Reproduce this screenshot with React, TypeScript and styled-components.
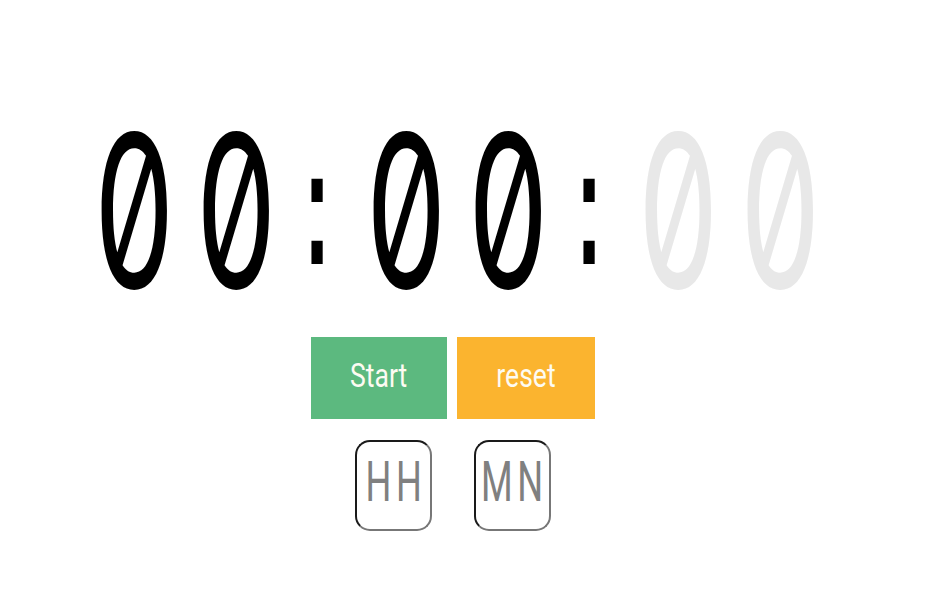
import React from "react";
import styled, { createGlobalStyle } from "styled-components";

const Global = createGlobalStyle`
  html, body { margin: 0; padding: 0; background: #fff; }
  body { font-family: Roboto, "DejaVu Sans Condensed", sans-serif; }
`;

const Page = styled.main`
  width: 906px;
  display: flex;
  flex-direction: column;
  align-items: center;
  padding-top: 110px;
`;

const Clock = styled.div`
  display: flex;
  height: 200px;
  align-items: center;
`;

const DigitCell = styled.div`
  width: 102px;
  box-sizing: border-box;
  padding-left: 9px;
  display: flex;
  justify-content: center;
  align-items: center;
`;

const ColonCell = styled.div`
  width: 68px;
  display: flex;
  justify-content: center;
  align-items: center;
`;

const Digit = styled.span<{ $dim?: boolean }>`
  font-family: Inter, sans-serif;
  font-size: 213px;
  font-weight: 400;
  line-height: 1;
  font-feature-settings: "zero" 1;
  font-variant-numeric: slashed-zero;
  color: ${(p) => (p.$dim ? "#e8e8e8" : "#000")};
  transform: scaleX(0.6);
`;

const Colon = styled.span`
  font-family: "Liberation Sans", sans-serif;
  font-weight: 700;
  font-size: 80px;
  line-height: 1;
  color: #000;
  transform: translateY(-3px) scaleY(2.1);
`;

const Buttons = styled.div`
  display: flex;
  gap: 10px;
  margin-top: 27px;
`;

const Action = styled.button<{ $bg: string; $w: number }>`
  width: ${(p) => p.$w}px;
  height: 82px;
  border: none;
  background: ${(p) => p.$bg};
  color: #fdfbf2;
  font-family: inherit;
  padding: 0 0 6px;
  display: flex;
  align-items: center;
  justify-content: center;
  cursor: pointer;
`;

const ActionLabel = styled.span`
  display: inline-block;
  font-size: 34px;
  font-weight: 400;
  line-height: 1;
  transform: scaleX(0.78);
`;

const Units = styled.div`
  display: flex;
  gap: 42px;
  margin-top: 21px;
`;

const Unit = styled.div`
  width: 77px;
  height: 91px;
  box-sizing: border-box;
  border: 2px solid;
  border-color: #1a1a1a #777 #777 #1a1a1a;
  border-radius: 15px;
  display: flex;
  align-items: center;
  justify-content: center;
  padding-bottom: 6px;
`;

const UnitLabel = styled.span`
  display: inline-block;
  color: #808080;
  font-size: 55px;
  font-weight: 400;
  line-height: 1;
  letter-spacing: 7px;
  padding-left: 7px;
  transform: scaleX(0.66);
`;

export default function App() {
  const d = (dim?: boolean) => (
    <DigitCell>
      <Digit $dim={dim}>0</Digit>
    </DigitCell>
  );
  return (
    <>
      <Global />
      <Page>
        <Clock>
          {d()}
          {d()}
          <ColonCell><Colon>:</Colon></ColonCell>
          {d()}
          {d()}
          <ColonCell><Colon>:</Colon></ColonCell>
          {d(true)}
          {d(true)}
        </Clock>
        <Buttons>
          <Action $bg="#5cb97f" $w={136}><ActionLabel>Start</ActionLabel></Action>
          <Action $bg="#fbb42f" $w={138}><ActionLabel>reset</ActionLabel></Action>
        </Buttons>
        <Units>
          <Unit><UnitLabel>HH</UnitLabel></Unit>
          <Unit><UnitLabel>MN</UnitLabel></Unit>
        </Units>
      </Page>
    </>
  );
}
